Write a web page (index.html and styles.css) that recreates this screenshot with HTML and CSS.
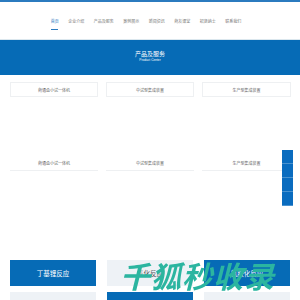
FILE: index.html
```html
<!DOCTYPE html>
<html lang="zh-CN">
<head>
    <meta charset="UTF-8">
    <title>产品及服务</title>
    <link rel="stylesheet" href="styles.css">
</head>
<body>
<div class="topline"></div>
<div class="nav">
    <a class="on">首页</a>
    <a>企业介绍</a>
    <a>产品及服务</a>
    <a>案例展示</a>
    <a>新闻资讯</a>
    <a>商友课堂</a>
    <a>招贤纳士</a>
    <a>联系我们</a>
</div>
<div class="banner">
    <h2>产品及服务</h2>
    <p>Product Center</p>
</div>
<div class="row first">
    <div class="item">商通盒小试一体机</div>
    <div class="item">中试型集成装置</div>
    <div class="item">生产型集成装置</div>
</div>
<div class="row second">
    <div class="item">商通盒小试一体机</div>
    <div class="item">中试型集成装置</div>
    <div class="item">生产型集成装置</div>
</div>
<div class="row cases">
    <div class="case blue">丁基锂反应</div>
    <div class="case light">氢化反应</div>
    <div class="case blue">氯胺化反应</div>
</div>
<div class="row cases next">
    <div class="case light"></div>
    <div class="case blue"></div>
    <div class="case light"></div>
</div>
<div class="side">
    <span></span><span></span><span></span><span></span>
</div>
<div class="mark">千狐秒收录</div>
</body>
</html>
```

FILE: styles.css
```css
body {
    margin: 0;
    font-family: "Noto Sans CJK SC", "Noto Sans", sans-serif;
    background: #fff;
    overflow: hidden;
}

.topline {
    height: 2px;
    background-color: #2b7bbf;
}

.nav {
    display: flex;
    justify-content: center;
    gap: 9.5px;
    padding: 16px 0 0 0;
    height: 21px;
    border-bottom: 1px solid #dbe7ee;
    margin-left: -8px;
}

.nav a {
    font-size: 4px;
    color: #777;
    line-height: 6px;
    height: 12px;
}

.nav a.on {
    color: #2b7bbf;
    background: linear-gradient(#2b7bbf, #2b7bbf) no-repeat 50% 100% / 7px 1px;
}

.banner {
    background-color: #066bb6;
    height: 35px;
    text-align: center;
    color: #fff;
    box-sizing: border-box;
    padding-top: 10px;
}

.banner h2 {
    margin: 0;
    font-size: 6px;
    font-weight: normal;
    line-height: 8px;
}

.banner p {
    margin: 0;
    font-size: 3.2px;
    line-height: 5px;
    font-family: "Liberation Sans", sans-serif;
}

.row {
    display: grid;
    grid-template-columns: 88px 88px 89px;
    gap: 8px;
    padding: 0 10px;
}

.item {
    font-size: 4px;
    color: #666;
    text-align: center;
}

.first {
    margin-top: 7px;
}

.first .item {
    border: 1px solid #eef0f2;
    height: 13px;
    line-height: 14px;
}

.second {
    margin-top: 60px;
}

.second .item {
    border-bottom: 1px solid #eef0f2;
    height: 13px;
    line-height: 12px;
}

.cases {
    margin-top: 89px;
    gap: 11px;
    grid-template-columns: 86px 86px 86px;
}

.case {
    height: 26px;
    line-height: 26px;
    text-align: center;
    font-size: 6.5px;
}

.case.blue {
    background-color: #066bb6;
    color: #fff;
}

.case.light {
    background-color: #eef2f6;
    color: #555;
}

.next {
    margin-top: 6px;
}

.side {
    position: fixed;
    left: 282px;
    top: 150px;
    width: 11px;
    display: flex;
    flex-direction: column;
}

.side span {
    height: 13px;
    background-color: #0a6cbf;
    border-bottom: 1px solid #4a92cf;
}

.mark {
    position: fixed;
    left: 120px;
    top: 256px;
    font-size: 30px;
    font-weight: bold;
    font-style: italic;
    color: #2bb5a0;
    letter-spacing: 1px;
    line-height: 38px;
}
```
